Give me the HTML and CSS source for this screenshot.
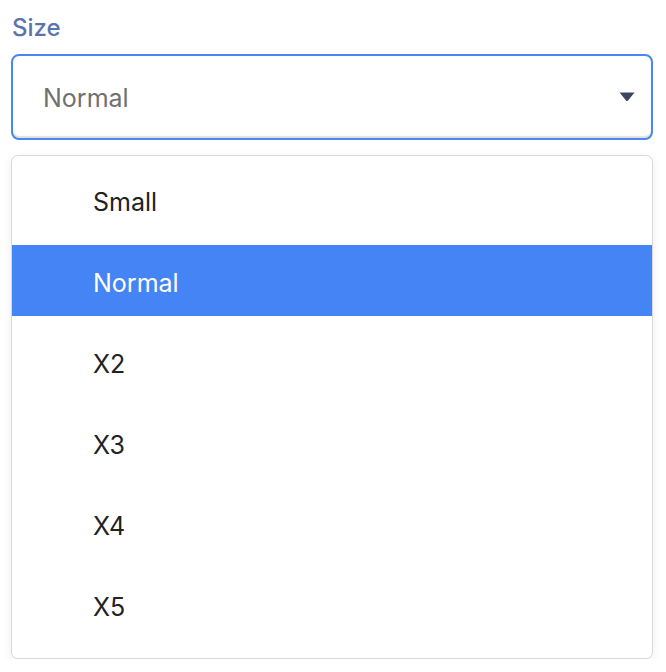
FILE: index.html
```html
<!DOCTYPE html>
<html>
<head>
<meta charset="utf-8">
<link rel="stylesheet" href="styles.css">
</head>
<body>
<div class="field">
  <label class="label">Size</label>
  <div class="select">
    <span class="value">Normal</span>
    <svg class="caret" width="16" height="10" viewBox="0 0 16 10"><path d="M0.5 0.5 H15.5 L9 8.6 Q8 9.6 7 8.6 Z" fill="#3e4660"/></svg>
  </div>
  <ul class="menu">
    <li class="item">Small</li>
    <li class="item active">Normal</li>
    <li class="item">X2</li>
    <li class="item">X3</li>
    <li class="item">X4</li>
    <li class="item">X5</li>
  </ul>
</div>
</body>
</html>
```
FILE: styles.css
```css
html, body {
  margin: 0;
  padding: 0;
  background: #ffffff;
}
body {
  font-family: Inter, "Noto Sans", sans-serif;
}
.field {
  padding: 14px 13px 0 11px;
  display: flex;
  flex-direction: column;
}
.label {
  font-size: 24px;
  font-weight: 500;
  color: #5b73ad;
  line-height: 28px;
  margin-left: 1px;
  margin-bottom: 12px;
}
.select {
  height: 86px;
  box-sizing: border-box;
  border: 2px solid #4a86f0;
  border-radius: 8px;
  box-shadow: inset 0 -2px 1px rgba(0,0,0,0.12);
  display: flex;
  align-items: center;
  justify-content: space-between;
  padding: 0 16px 0 30px;
}
.value {
  font-size: 25px;
  color: #707070;
  margin-top: 2px;
}
.caret {
  display: block;
}
.menu {
  list-style: none;
  margin: 15px 0 0 0;
  padding: 8px 0;
  border: 1px solid #d9d9d9;
  border-radius: 7px;
  box-shadow: 0 3px 10px rgba(0,0,0,0.08);
  background: #fff;
}
.item {
  height: 71px;
  margin-bottom: 10px;
  display: flex;
  align-items: center;
  padding-left: 81px;
  font-size: 25px;
  color: #222222;
  padding-top: 5px;
  box-sizing: border-box;
}
.item.active {
  background: #4584f4;
  color: #ffffff;
}
```
